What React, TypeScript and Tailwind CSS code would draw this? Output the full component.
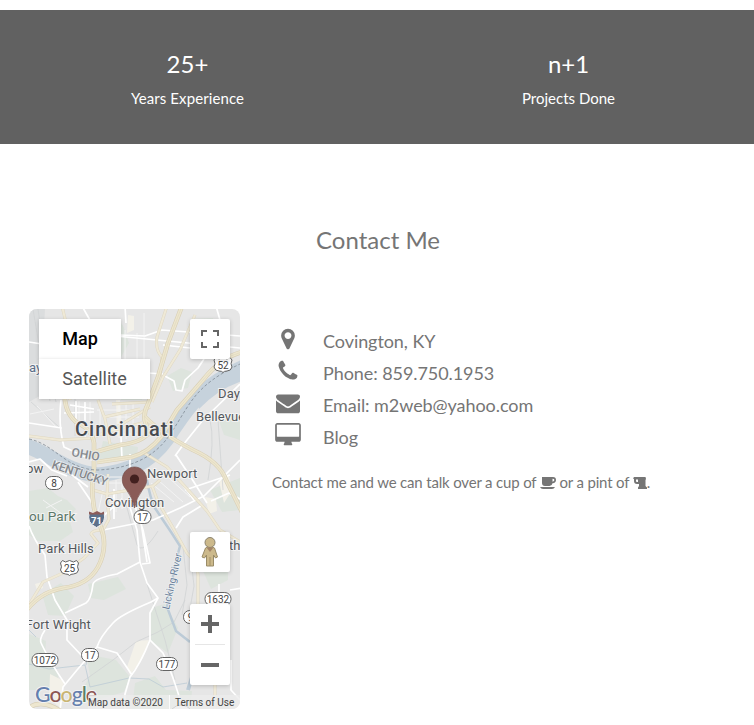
import React from "react";

const highways = [
  "M64 380C64 404 66 413 76 422Q92 429 94 443L94 470Q91 484 93 500Q94 514 100 525Q109 546 98 567Q88 585 63 588Q40 592 26 611",
  "M182 306L168 343L158 377L148 404Q140 419 150 431Q144 442 120 445L95 452",
  "M242 352Q221 357 203 380L177 410L161 437Q148 453 132 457L97 462",
  "M144 416Q160 433 193 450Q220 462 226 480L242 512",
  "M26 710Q40 697 62 712",
];

const parkways = [
  "M62 306L67 327Q58 345 62 370L70 400",
  "M167 306L157 337Q155 350 162 357L160 378",
  "M195 315L180 350L163 377L152 402",
  "M29 436L60 440L93 438L122 424L150 407",
  "M141 451L167 467L180 481L207 511L220 530L242 543",
  "M103 530Q92 530 91 534L98 543L84 558L63 573L43 582L27 608",
  "M93 490L107 494L130 490L153 486L160 480",
  "M152 486L158 502L172 526L187 553Q199 565 198 577L198 612",
  "M215 685L215 710",
  "M98 400L105 419L110 444M112 404L150 402M104 417L140 409M111 431L142 423",
  "M108 474L107 497L109 519L103 530",
];

const streets = [
  "M29 526Q33 538 45 555L47 577L55 600L67 620L67 640L83 657",
  "M45 630Q38 640 42 645Q50 662 65 684",
  "M140 562L117 574Q95 578 93 584Q91 600 86 603L65 613",
  "M129 504L137 530L140 562L147 583L158 598L150 613L150 640Q140 665 130 677L125 694V710",
  "M150 640L163 653Q173 675 182 706",
  "M158 598L151 602Q120 615 113 623Q100 637 97 647L77 670L63 687L60 710",
  "M97 647L117 653L132 675",
  "M103 530L153 520L180 508L204 496L240 460",
  "M175 456L183 445L203 420L240 384",
  "M130 454V480M121 437L122 459M114 489V519M100 519L122 499",
  "M135 506L143 530L150 563L142 564M141 522L147 562",
  "M176 455L192 479L207 503M173 472L194 500M185 490L230 475",
  "M29 342L42 344L70 359L104 370L163 374",
  "M120 340L121 399M82 306L91 322L105 335L240 348",
  "M119 335L145 336L162 330L240 336M125 306L126 323M190 348L163 345",
  "M61 400Q58 425 64 447L94 461M64 413L94 412M29 423L62 428",
  "M70 405L94 409M76 401V427M85 402V440",
  "M55 461L72 475L88 487M29 462L40 459L52 470L67 476",
  "M163 375L174 381L176 390L182 391L185 380L198 368L204 359",
  "M191 320L208 330L219 328M216 306L220 320",
  "M201 506L183 517L176 528M211 501L229 493L242 500M230 590L242 588",
  "M231 660V690L240 700M219 584V600",
  "M78 482L91 501L94 511",
];

const minorStreets =
  "M79 401V421M90 402V420M100 405V424M97 410H139M109 417H139M102 427H138M111 434H138M119 400V438M126 402V439M133 403V437M99 477H127M99 483H129M103 490L98 513M116 480V512M122 479V509M129 481V504M151 483L174 502M158 480L183 502M169 478L190 497M37 406L56 427M30 414L54 409M125 330V390M137 333V374M144 313V364M43 500L62 514M46 508L62 500";

const parks = [
  "M113 325Q119 318 124 328L129 343L120 359L108 354L102 342Z",
  "M191 319L213 318L219 336L210 341L193 333Z",
  "M167 376L181 368L192 372L188 388L173 391Z",
  "M29 491L48 488L58 496L67 500L76 509L69 518L73 532L60 541L38 541L29 535Z",
  "M29 634L46 641L45 657L58 674L59 690L29 690Z",
  "M86 654L116 660L130 677L124 692L97 700L82 690L90 676Z",
  "M135 683L155 676L166 690L192 691L190 709H132Z",
  "M151 608L165 604L178 628L168 653L151 641Z",
  "M42 594L61 583L74 596L65 616L48 615Z",
  "M103 441L138 447L137 457L99 459Z",
  "M196 537L214 533L228 541L228 580L211 589L203 571Z",
  "M219 421L240 414V440L224 435Z",
  "M210 490L240 478V510L222 512Z",
  "M121 378L142 374L142 400L121 400Z",
  "M88 584L118 577L126 589L104 600L91 598Z",
];

function Shield({ x, y, text, w = 17 }: { x: number; y: number; text: string; w?: number }) {
  return (
    <g>
      <rect x={x - w / 2} y={y - 6.5} width={w} height="13" rx="6.2" fill="#fff" stroke="#646464" />
      <text x={x} y={y + 3.5} textAnchor="middle" fontSize="10" fill="#444">{text}</text>
    </g>
  );
}

function UsShield({ x, y, text }: { x: number; y: number; text: string }) {
  return (
    <g transform={`translate(${x} ${y})`}>
      <path d="M-7-7.5L-4-6L0-7.5L4-6L7-7.5L9-5Q7-1 9 2Q8 6 4 6Q1 6 0 7.5Q-1 6-4 6Q-8 6-9 2Q-7-1-9-5Z" fill="#fff" stroke="#646464" />
      <text y="3.5" textAnchor="middle" fontSize="10" fill="#444">{text}</text>
    </g>
  );
}

function Place({ x, y, children, size = 13, fill = "#54575b" }: { x: number; y: number; children: string; size?: number; fill?: string }) {
  return (
    <text x={x} y={y} fontSize={size} fill={fill} stroke="#f3f3f3" strokeWidth="2" paintOrder="stroke" letterSpacing="0.1">{children}</text>
  );
}

function MapCanvas() {
  return (
    <svg className="block h-[400px] w-[211px] font-['Roboto',sans-serif]" viewBox="29 309 211 400">
      <rect x="29" y="309" width="211" height="400" fill="#e6e6e6" />
      <path d="M29 309H45L43 345L47 392L29 402Z" fill="#dbddde" />
      {parks.map((d) => <path key={d} d={d} fill="#dde4dd" />)}
      <path d="M136 641L149 640L143 658L130 675L127 667ZM50 674L64 681L61 708L49 699ZM128 315L134 316V330L127 333ZM116 400L120 400L122 430L117 437ZM219 481L229 474L231 492L224 503ZM205 497L216 499L217 511L209 514ZM35 584L42 582L43 588L37 590Z" fill="#f3f1e9" />
      <g fill="none" stroke="#d0d3d4" strokeWidth="0.8">
        <path d="M33 309L39 345L50 401M38 309L43 345L56 402M31 402L59 427M75 399V436M126 504L137 545Q143 555 158 531M82 682L113 660L136 642L158 632L174 622L185 600M140 562L165 640L175 680M183 546L187 585L182 615M190 550L194 586L188 620M223 490L218 420M210 420Q215 440 208 480" />
        <path d="M29 664L49 669L85 665L90 687L129 678L149 679L163 687L187 683M86 665L88 654M29 630L36 637" stroke="#bccbd6" />
      </g>
      <path d="M18 445C42 446 62 472 98 475C139 470 157 457 174 428C190 404 204 384 246 366" fill="none" stroke="#c6d2dc" strokeWidth="15" />
      <path d="M195 394Q211 375 242 361V381Q218 389 199 409Z" fill="#c6d2dc" />
      <path d="M147 480Q150 498 155 508L171 532L180 546L176 561L167 607L176 631L190 642" fill="none" stroke="#bccbd7" strokeWidth="2.5" />
      <path d="M193 674L188 690" stroke="#bccbd7" strokeWidth="4" />
      <path d={minorStreets} fill="none" stroke="#f3f3f3" strokeWidth="1" />
      {streets.map((d) => <path key={d} d={d} fill="none" stroke="#fff" strokeWidth="1.7" strokeLinejoin="round" />)}
      {parkways.map((d) => <path key={d} d={d} fill="none" stroke="#dfd8c2" strokeWidth="3" strokeLinejoin="round" />)}
      {parkways.map((d) => <path key={d} d={d} fill="none" stroke="#efe9d7" strokeWidth="2" strokeLinejoin="round" />)}
      {highways.map((d) => <path key={d} d={d} fill="none" stroke="#d8cfb5" strokeWidth="4.6" strokeLinejoin="round" />)}
      {highways.map((d) => <path key={d} d={d} fill="none" stroke="#ede6cf" strokeWidth="3.4" strokeLinejoin="round" />)}
      {highways.slice(0, 4).map((d) => <path key={d} d={d} fill="none" stroke="#dfd6bb" strokeWidth="0.6" />)}
      <path d="M29 439C55 444 66 470 98 470C140 468 160 450 171 433C191 403 194 386 240 364" fill="none" stroke="#818c96" strokeDasharray="3 2" strokeWidth="0.8" />
      <Place x={29} y={372} fill="#5b6e87">ay</Place>
      <text x="75" y="436" fontSize="20" fontWeight="500" fill="#474b51" stroke="#eeeeee" strokeWidth="2" paintOrder="stroke" letterSpacing="1">Cincinnati</text>
      <Place x={218} y={398}>Day</Place>
      <Place x={196} y={421}>Bellevue</Place>
      <Place x={26} y={473}>ow</Place>
      <text transform="translate(71 456) rotate(10)" fontSize="12" fill="#85888c" fontWeight="500" stroke="#e8ebed" strokeWidth="1.5" paintOrder="stroke">OHIO</text>
      <text transform="translate(51 468) rotate(18)" fontSize="12" fill="#85888c" fontWeight="500" stroke="#e8ebed" strokeWidth="1.5" paintOrder="stroke" letterSpacing="-0.35">KENTUCKY</text>
      <Place x={147} y={478}>Newport</Place>
      <Place x={105} y={507}>Covington</Place>
      <Place x={29} y={521} size={13.5} fill="#5b7868">ou Park</Place>
      <Place x={38} y={553}>Park Hills</Place>
      <Place x={229} y={550}>th</Place>
      <Place x={25.5} y={629}>Fort Wright</Place>
      <text transform="translate(169 610) rotate(-77)" fontSize="10.2" fill="#6a809a" stroke="#edf0f2" strokeWidth="1.5" paintOrder="stroke">Licking River</text>
      <UsShield x={223} y={365} text="52" />
      <Shield x={54} y={483} text="8" />
      <Shield x={142.5} y={517} text="17" />
      <UsShield x={69.5} y={568} text="25" />
      <Shield x={218} y={599} text="1632" w={26} />
      <Shield x={45} y={660} text="1072" w={26} />
      <Shield x={90} y={655} text="17" />
      <Shield x={167} y={664} text="177" w={21} />
      <Shield x={190.5} y={617} text="9" w={14} />
      <path d="M172 709Q176 705 181 705Q187 705 190 709" fill="#fff" stroke="#646464" />
      <path d="M89.5 512L93 513.5L97 511.5L100.5 513.5L104 512Q107 523 96.5 527.5Q86 523 89.5 512Z" fill="#5c708a" stroke="#f5f5f5" />
      <path d="M89 511.5L93 513L97 511L101 513L104 511.5V514.5H89Z" fill="#8c5c59" />
      <text x="96.5" y="523.5" fontSize="9.5" fontWeight="700" fill="#fff" textAnchor="middle">71</text>
      <path d="M134.5 508Q133 498 126 489C118 480 124 467 134.5 467S151 480 143 489Q136 498 134.5 508Z" fill="#8a5b57" stroke="#76504d" strokeWidth="0.7" />
      <circle cx="134.5" cy="479" r="4.6" fill="#42201f" />
      <text x="35" y="702" fontFamily="Lato" fontSize="21.5" fontWeight="500" stroke="#f3f3f3" strokeWidth="2" paintOrder="stroke" letterSpacing="-1.1">
        <tspan fill="#657fae">G</tspan><tspan fill="#8d5754">o</tspan><tspan fill="#c9b572">o</tspan><tspan fill="#657fae">g</tspan><tspan fill="#5d8065">l</tspan><tspan fill="#8d5754">e</tspan>
      </text>
    </svg>
  );
}

function Pegman() {
  return (
    <svg className="h-8 w-5" viewBox="0 0 20 32">
      <path d="M5.5 12L8 10.5H11L14.5 12L17.5 21L15.5 22L13.5 19V30H6.5V19L4.5 22L2 21Z" fill="#ccb98b" stroke="#9a8c68" />
      <circle cx="10" cy="6.5" r="5" fill="#ccb98b" stroke="#8c8470" />
      <path d="M6.5 11.5H13.5L10 16Z" fill="#a38467" />
      <path d="M10 21V30" stroke="#a29065" />
    </svg>
  );
}

function ContactMap() {
  return (
    <div className="relative h-[400px] w-[211px] shrink-0 overflow-hidden rounded-lg font-['Roboto',sans-serif]">
      <MapCanvas />
      <div className="absolute top-[10px] left-[10px] flex flex-col items-start text-[18px]">
        <button className="h-10 w-[82px] bg-white pb-0.5 font-medium text-black shadow-[0_1px_4px_rgba(0,0,0,0.2)]">Map</button>
        <button className="h-10 w-[111px] bg-white pb-0.5 text-[#565656] shadow-[0_1px_4px_rgba(0,0,0,0.2)]">Satellite</button>
      </div>
      <button className="absolute top-[10px] right-[10px] flex size-10 items-center justify-center rounded-[2px] bg-white shadow-[0_1px_4px_rgba(0,0,0,0.2)]">
        <svg className="size-[18px]" viewBox="0 0 18 18" fill="none" stroke="#666" strokeWidth="2"><path d="M1 6V1H6M12 1H17V6M17 12V17H12M6 17H1V12" /></svg>
      </button>
      <button className="absolute top-[223px] right-[10px] flex size-10 items-center justify-center rounded-[2px] bg-white shadow-[0_1px_4px_rgba(0,0,0,0.2)]"><Pegman /></button>
      <div className="absolute top-[295px] right-[10px] flex h-[81px] w-10 flex-col items-center rounded-[2px] bg-white shadow-[0_1px_4px_rgba(0,0,0,0.2)]">
        <button className="flex h-10 w-10 items-center justify-center"><svg className="size-[18px]" viewBox="0 0 18 18"><path d="M7 0H11V7H18V11H11V18H7V11H0V7H7Z" fill="#666" /></svg></button>
        <div className="h-px w-[30px] bg-[#e6e6e6]" />
        <button className="flex h-10 w-10 items-center justify-center"><span className="h-1 w-[18px] bg-[#666]" /></button>
      </div>
      <div className="absolute right-0 bottom-0 flex h-[14px] w-[152px] items-center bg-[#ececec]/80 text-[10px] whitespace-nowrap text-[#444]">
        <span className="w-[81px]">Map data ©2020</span>
        <span className="h-[14px] w-px bg-white/80" />
        <span className="pl-[5px]">Terms of Use</span>
      </div>
    </div>
  );
}

const contactRows = [
  {
    label: "Covington, KY",
    box: "0 0 1024 1792",
    size: "h-6 w-[14px]",
    path: "M768 640q0-106-75-181t-181-75-181 75-75 181 75 181 181 75 181-75 75-181zm256 0q0 109-33 179l-364 774q-16 33-47.5 52t-67.5 19-67.5-19-46.5-52l-365-774q-33-70-33-179 0-212 150-362t362-150 362 150 150 362z",
  },
  {
    label: "Phone: 859.750.1953",
    box: "0 0 1792 1792",
    size: "size-6",
    path: "M1600 1240q0 27-10 70.5t-21 68.5q-21 50-122 106-94 51-186 51-27 0-53-3.5t-57.5-12.5-47-14.5-55.5-20.5-49-18q-98-35-175-83-127-79-264-216t-216-264q-48-77-83-175-3-9-18-49t-20.5-55.5-14.5-47-12.5-57.5-3.5-53q0-92 51-186 56-101 106-122 25-11 68.5-21t70.5-10q14 0 21 3 18 6 53 76 11 19 30 54t35 63.5 31 53.5q3 4 17.5 25t21.5 35.5 7 28.5q0 20-28.5 50t-62 55-62 53-28.5 46q0 9 5 22.5t8.5 20.5 14 24 11.5 19q76 137 174 235t235 174q2 1 19 11.5t24 14 20.5 8.5 22.5 5q18 0 46-28.5t53-62 55-62 50-28.5q14 0 28.5 7t35.5 21.5 25 17.5q25 15 53.5 31t63.5 35 54 30q70 35 76 53 3 7 3 21z",
  },
  {
    label: "Email: m2web@yahoo.com",
    box: "0 0 1792 1792",
    size: "size-6",
    path: "M1792 710v794q0 66-47 113t-113 47h-1472q-66 0-113-47t-47-113v-794q44 49 101 87 362 246 497 345 57 42 92.5 65.5t94.5 48 110 24.5h2q51 0 110-24.5t94.5-48 92.5-65.5q170-123 498-345 57-39 100-87zm0-294q0 79-49 151t-122 123q-376 261-468 325-10 7-42.5 31t-54 38.5-52 32.5-57.5 27-50 9h-2q-23 0-50-9t-57.5-27-52-32.5-54-38.5-42.5-31q-91-64-262-182.5t-205-142.5q-62-42-117-115.5t-55-136.5q0-78 41.5-130t118.5-52h1472q65 0 112.5 47t47.5 113z",
  },
  {
    label: "Blog",
    box: "0 0 1920 1792",
    size: "h-6 w-[26px]",
    path: "M1792 992v-832q0-13-9.5-22.5t-22.5-9.5h-1600q-13 0-22.5 9.5t-9.5 22.5v832q0 13 9.5 22.5t22.5 9.5h1600q13 0 22.5-9.5t9.5-22.5zm128-832v1088q0 66-47 113t-113 47h-544q0 37 16 77.5t32 71 16 43.5q0 26-19 45t-45 19h-512q-26 0-45-19t-19-45q0-14 16-44t32-70 16-78h-544q-66 0-113-47t-47-113v-1088q0-66 47-113t113-47h1600q66 0 113 47t47 113z",
  },
];

export default function App() {
  return (
    <main className="h-[725px] overflow-hidden bg-white pt-[10px] font-['Lato',sans-serif] text-[#757575]">
      <section className="flex h-[134px] bg-[#616161] pt-9 text-center text-white">
        <div className="w-[375px]">
          <div className="text-[24px] leading-9">25+</div>
          <div className="mt-[5px] text-[15px] leading-[23px] tracking-[0.1px]">Years Experience</div>
        </div>
        <div className="flex-1 pl-[8px]">
          <div className="text-[24px] leading-9">n+1</div>
          <div className="mt-[5px] text-[15px] leading-[23px]">Projects Done</div>
        </div>
      </section>
      <h2 className="mt-[78px] pl-0.5 text-center text-[24px] leading-9">Contact Me</h2>
      <section className="mt-[51px] flex pl-[29px]">
        <ContactMap />
        <div className="pt-4 pl-8">
          {contactRows.map((row) => (
            <div key={row.label} className="flex h-8 items-start text-[18px]">
              <span className="flex w-[31px] justify-center pt-[2px]">
                <svg className={row.size} viewBox={row.box} fill="currentColor"><path d={row.path} /></svg>
              </span>
              <span className="pl-5 leading-[33px] tracking-[-0.07px]">{row.label}</span>
            </div>
          ))}
          <p className="mt-[18px] flex items-center text-[15px] leading-[23px] tracking-[-0.17px] whitespace-pre">
            {"Contact me and we can talk over a cup of "}
            <svg className="h-3 w-4" viewBox="0 0 16 12" fill="currentColor"><path fillRule="evenodd" d="M2 0H13Q16 0 16 3Q16 6 12.5 6.3Q12 9 9.5 9H5Q2 9 2 6ZM12.5 1.7V4.7Q14.4 4.5 14.4 3.1Q14.4 1.7 12.5 1.7ZM0 10H15Q14 12 12 12H3Q1 12 0 10Z" /></svg>
            {" or a pint of "}
            <svg className="h-3 w-[14px]" viewBox="0 0 14 12" fill="currentColor"><path fillRule="evenodd" d="M1 0H12.5L13 2L12.5 3V9L14 10.5V12H5V10.5L6 9V7H4Q1 7 1 4V2L0 1.5ZM3 2.5V4.2Q3 5 4 5H5V2.5Z" /></svg>
            .
          </p>
        </div>
      </section>
    </main>
  );
}
